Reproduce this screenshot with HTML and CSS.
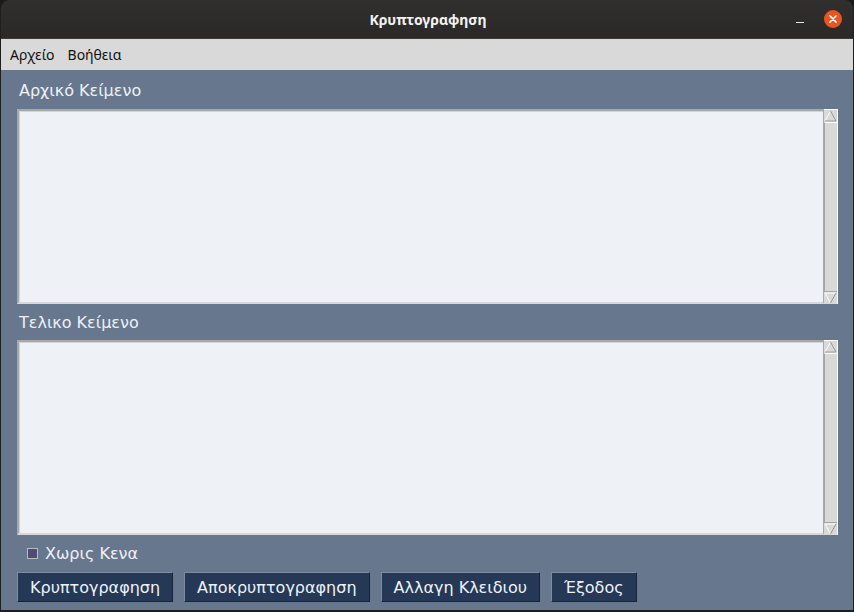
FILE: index.html
```html
<!DOCTYPE html>
<html lang="el">
<head>
<meta charset="utf-8">
<title>Κρυπτογραφηση</title>
<link rel="stylesheet" href="styles.css">
</head>
<body>
<div class="window">
  <header class="titlebar">
    <span class="title">Κρυπτογραφηση</span>
    <div class="controls">
      <span class="minimize"></span>
      <span class="close">
        <svg width="18" height="18" viewBox="0 0 18 18"><circle cx="9" cy="9" r="9" fill="#e95420"/><path d="M5.8 5.8 L12.2 12.2 M12.2 5.8 L5.8 12.2" stroke="#fff" stroke-width="1.6" stroke-linecap="round"/></svg>
      </span>
    </div>
  </header>
  <nav class="menubar">
    <span class="menu-item">Αρχείο</span>
    <span class="menu-item">Βοήθεια</span>
  </nav>
  <main class="panel">
    <label class="field-label">Αρχικό Κείμενο</label>
    <div class="text-box">
      <textarea class="text-area"></textarea>
      <div class="scrollbar">
        <span class="arrow">
          <svg width="13" height="12" viewBox="0 0 13 12"><polygon points="6.5,1 12,11 1,11" fill="#d9d9d9" stroke="#ffffff" stroke-width="1"/><line x1="12" y1="11" x2="1" y2="11" stroke="#8c8c8c"/><line x1="6.5" y1="1" x2="12" y2="11" stroke="#8c8c8c"/></svg>
        </span>
        <span class="slider"></span>
        <span class="arrow">
          <svg width="13" height="12" viewBox="0 0 13 12"><polygon points="1,1 12,1 6.5,11" fill="#d9d9d9" stroke="#ffffff" stroke-width="1"/><line x1="12" y1="1" x2="6.5" y2="11" stroke="#8c8c8c"/></svg>
        </span>
      </div>
    </div>
    <label class="field-label second">Τελικο Κείμενο</label>
    <div class="text-box">
      <textarea class="text-area"></textarea>
      <div class="scrollbar">
        <span class="arrow">
          <svg width="13" height="12" viewBox="0 0 13 12"><polygon points="6.5,1 12,11 1,11" fill="#d9d9d9" stroke="#ffffff" stroke-width="1"/><line x1="12" y1="11" x2="1" y2="11" stroke="#8c8c8c"/><line x1="6.5" y1="1" x2="12" y2="11" stroke="#8c8c8c"/></svg>
        </span>
        <span class="slider"></span>
        <span class="arrow">
          <svg width="13" height="12" viewBox="0 0 13 12"><polygon points="1,1 12,1 6.5,11" fill="#d9d9d9" stroke="#ffffff" stroke-width="1"/><line x1="12" y1="1" x2="6.5" y2="11" stroke="#8c8c8c"/></svg>
        </span>
      </div>
    </div>
    <div class="check-row">
      <span class="checkbox"></span>
      <span class="check-label">Χωρις Κενα</span>
    </div>
    <div class="buttons">
      <button class="btn">Κρυπτογραφηση</button>
      <button class="btn">Αποκρυπτογραφηση</button>
      <button class="btn">Αλλαγη Κλειδιου</button>
      <button class="btn">Έξοδος</button>
    </div>
  </main>
</div>
</body>
</html>
```

FILE: styles.css
```css
html, body {
  margin: 0;
  padding: 0;
  background: #1b1b1b;
}
.window {
  width: 854px;
  height: 612px;
  box-sizing: border-box;
  display: flex;
  flex-direction: column;
  border-left: 1px solid #1e1e1e;
  border-right: 1px solid #1e1e1e;
  border-bottom: 2px solid #1e1e1e;
  border-radius: 9px 9px 0 0;
  overflow: hidden;
}
.titlebar {
  height: 39px;
  flex: none;
  background: linear-gradient(#312f2e, #2b2928);
  display: flex;
  align-items: center;
  justify-content: center;
  position: relative;
  border-bottom: 1px solid #3c3a39;
  box-sizing: border-box;
}
.title {
  font-family: "Noto Sans", "DejaVu Sans", sans-serif;
  font-weight: bold;
  font-size: 14px;
  color: #f2f2f2;
  margin-left: 2px;
}
.controls {
  position: absolute;
  right: 11px;
  top: 10px;
  display: flex;
  align-items: center;
  gap: 20px;
}
.minimize {
  display: block;
  width: 8px;
  height: 1px;
  background: #e6e6e6;
  margin-top: 7px;
}
.close {
  display: block;
  width: 18px;
  height: 18px;
}
.close svg { display: block; }
.menubar {
  height: 31px;
  flex: none;
  background: #d9d9d9;
  display: flex;
  align-items: center;
  padding-left: 9px;
  gap: 13px;
  box-sizing: border-box;
}
.menu-item {
  font-family: "Noto Sans", "DejaVu Sans", sans-serif;
  font-size: 14px;
  color: #111;
}
.panel {
  flex: 1;
  background: #66778e;
  padding: 10px 15px 0 16px;
  display: flex;
  flex-direction: column;
}
.field-label {
  font-family: "DejaVu Sans", sans-serif;
  font-size: 16px;
  line-height: 22px;
  color: #eef1f6;
  padding-left: 2px;
  margin-bottom: 7px;
}
.field-label.second {
  margin-top: 8px;
  margin-bottom: 6px;
}
.text-box {
  display: flex;
  height: 195px;
}
.text-area {
  flex: 1;
  margin: 0;
  resize: none;
  background: #eef2f7;
  border-style: solid;
  border-width: 2px 1px 2px 2px;
  border-color: #a8a8a8 #a8a8a8 #d8d8d8 #a8a8a8;
  box-shadow: inset 1px 1px 0 #d4d4d4;
  outline: none;
  padding: 2px;
  font-family: "DejaVu Sans", sans-serif;
  font-size: 14px;
}
.scrollbar {
  width: 14px;
  display: flex;
  flex-direction: column;
  background: #d9d9d9;
  border-right: 1px solid #ffffff;
  border-top: 1px solid #ffffff;
  box-sizing: border-box;
}
.arrow {
  display: block;
  height: 12px;
  flex: none;
}
.arrow svg { display: block; }
.slider {
  flex: 1;
  background: #d9d9d9;
  border-left: 1px solid #a5a5a5;
  border-top: 1px solid #ffffff;
  border-bottom: 1px solid #a5a5a5;
}
.check-row {
  display: flex;
  align-items: center;
  margin-top: 7px;
  margin-bottom: 8px;
  height: 22px;
  padding-left: 10px;
}
.checkbox {
  display: block;
  flex: none;
  width: 11px;
  height: 11px;
  background: #4f4e72;
  box-shadow: inset 0 0 0 1px #b9bbc8;
  margin-right: 7px;
}
.check-label {
  font-family: "DejaVu Sans", sans-serif;
  font-size: 16px;
  color: #eef1f6;
}
.buttons {
  display: flex;
  gap: 11px;
}
.btn {
  height: 30px;
  margin: 0;
  padding: 0 12px;
  background: #253856;
  color: #eef2f8;
  font-family: "DejaVu Sans", sans-serif;
  font-size: 16px;
  border: 1px solid;
  border-color: #7d8ca3 #16233a #16233a #7d8ca3;
  box-sizing: border-box;
}
```
